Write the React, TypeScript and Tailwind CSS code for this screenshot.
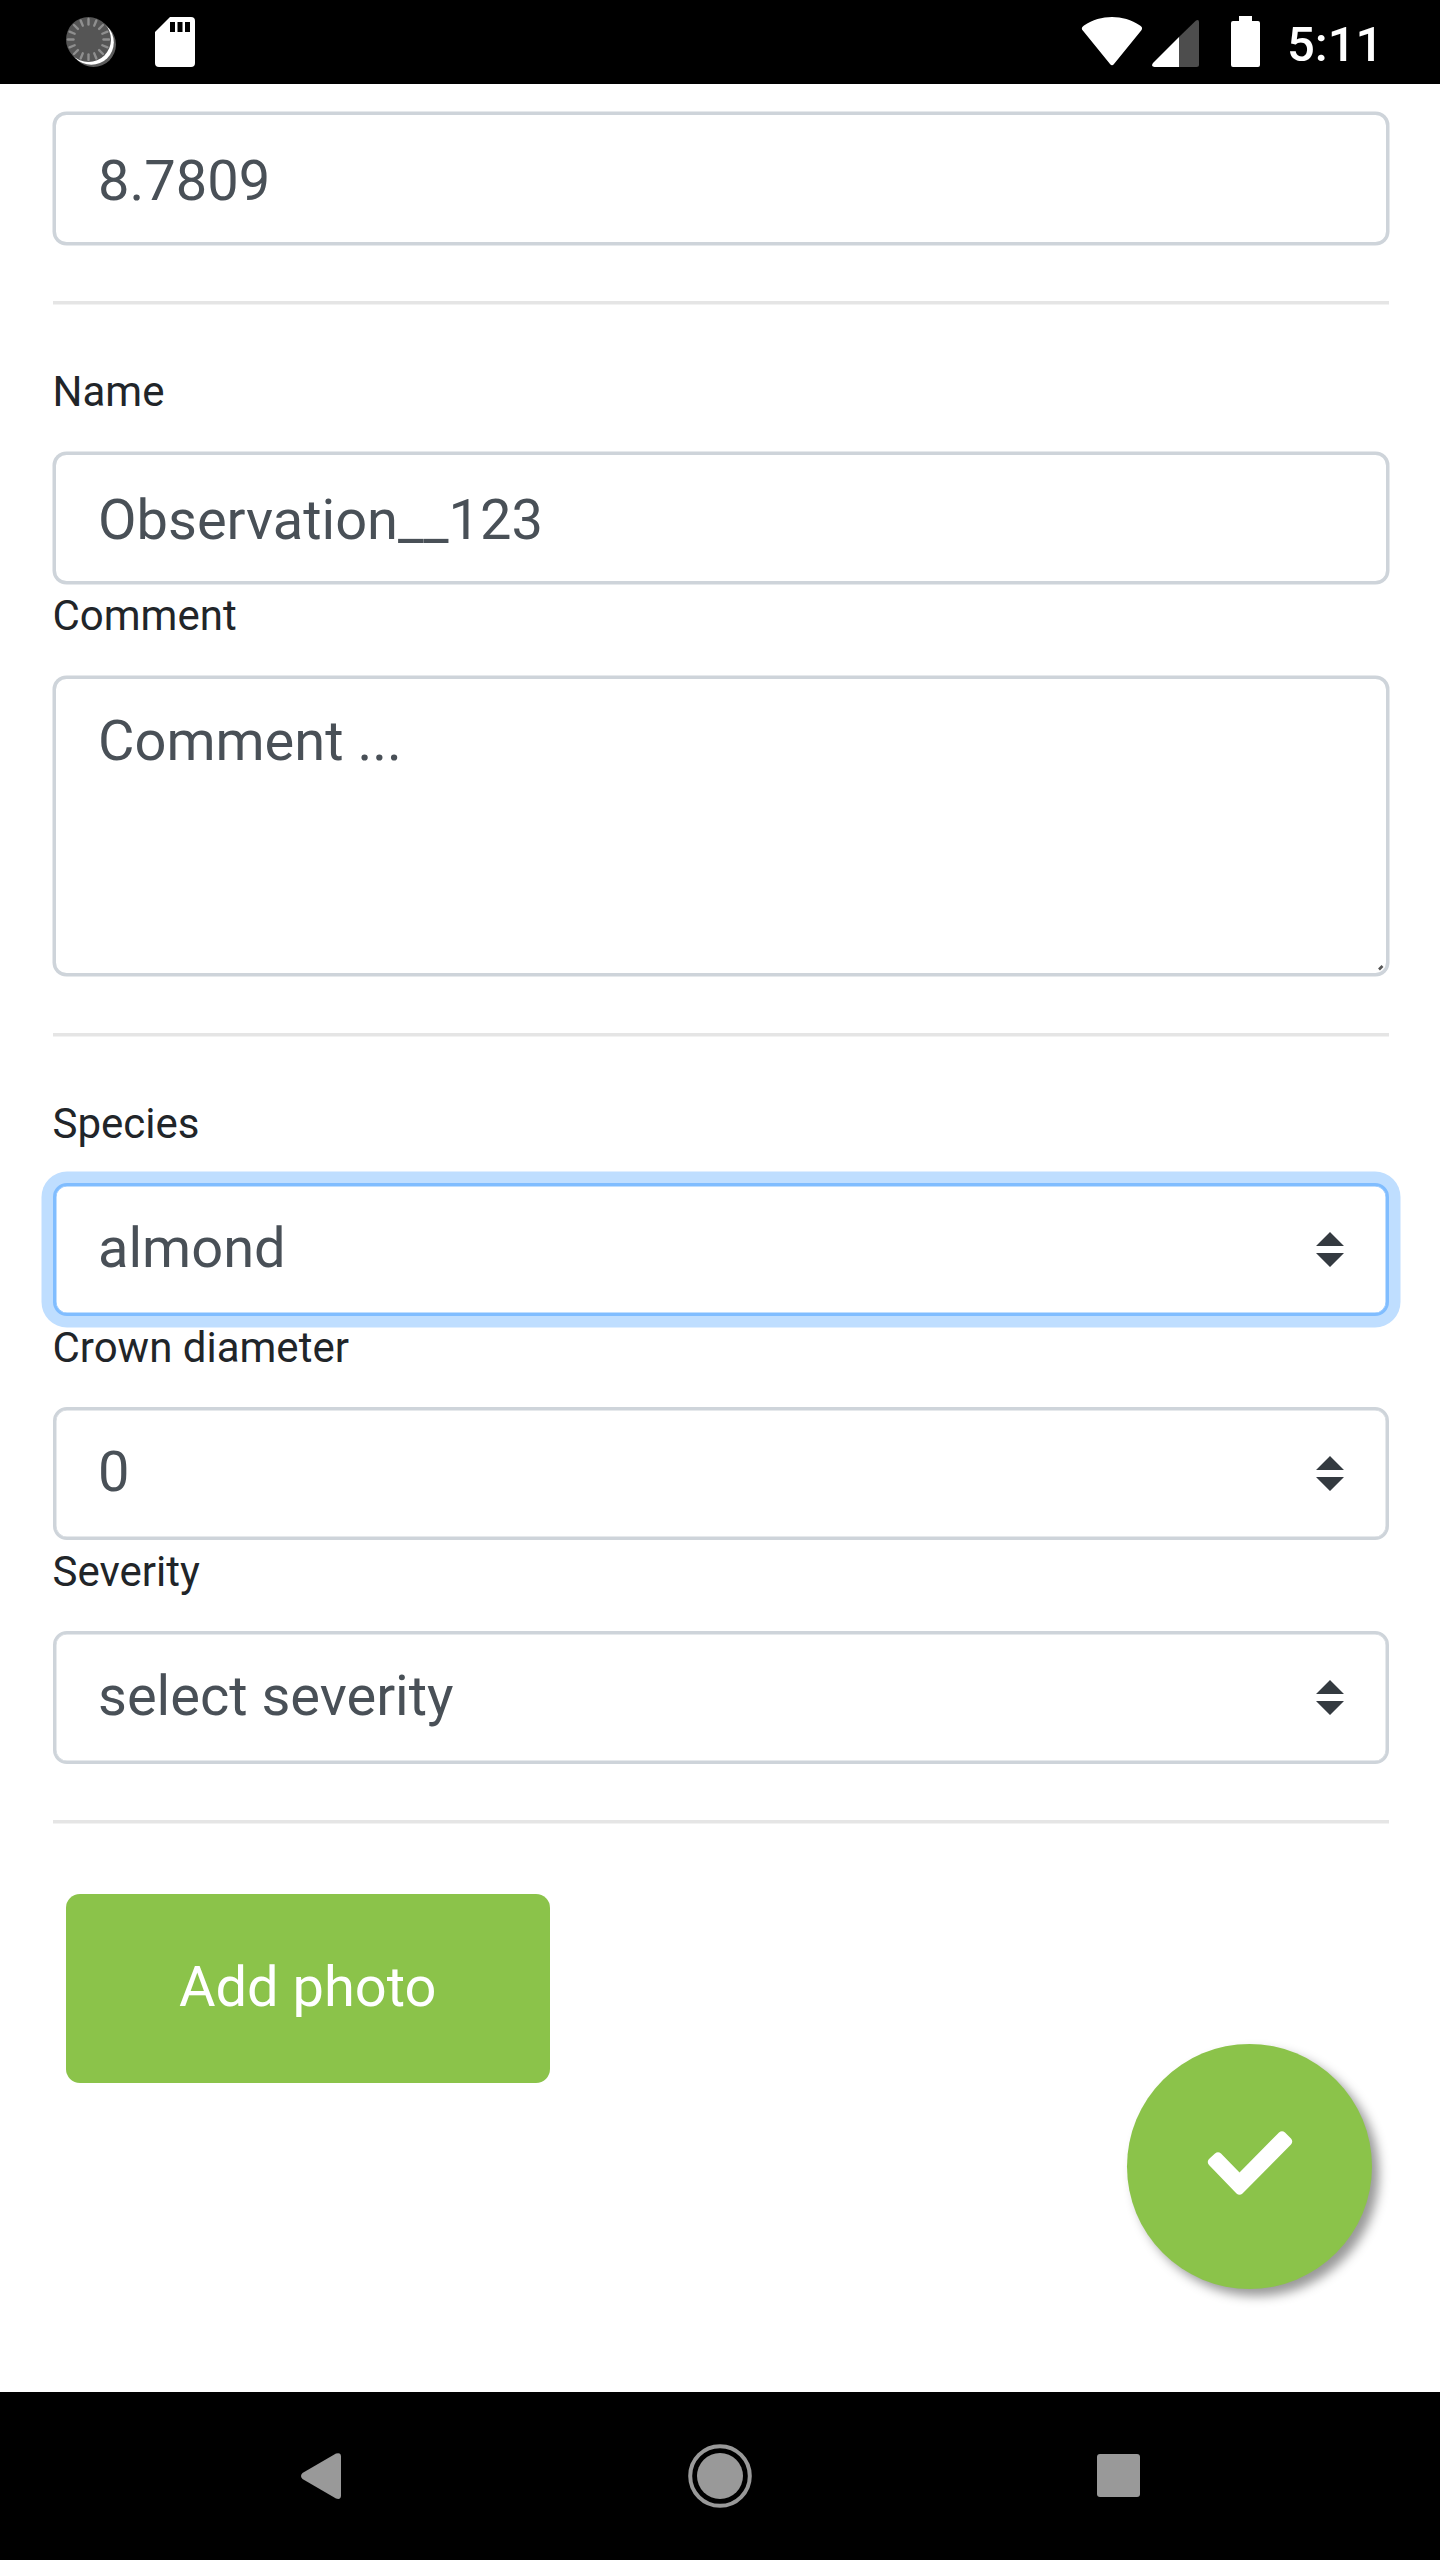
import type { ReactNode } from "react";

const rays = Array.from({ length: 16 }, (_, i) => i * 22.5);

function StatusBar() {
  return (
    <header className="flex h-[84px] shrink-0 items-start bg-black">
      <svg className="ml-[60px] h-[84px] w-[60px]" viewBox="60 0 60 84">
        <circle cx="93.500" cy="44.500" r="22.500" fill="#5c5c5c" />
        <circle cx="91.300" cy="42.300" r="22.500" fill="#fff" />
        <circle cx="88.500" cy="39.500" r="22.500" fill="#555" />
        {rays.map((a) => (
          <path
            key={a}
            d="M103.500 39.500h5.500"
            stroke="#8f8f8f"
            strokeWidth="2.4"
            strokeLinecap="round"
            transform={`rotate(${a} 88.5 39.5)`}
          />
        ))}
      </svg>
      <svg className="ml-[35px] h-[84px] w-[40px]" viewBox="155 0 40 84">
        <path d="M170 17h21a4 4 0 0 1 4 4v42a4 4 0 0 1-4 4h-32a4 4 0 0 1-4-4V32Z" fill="#fff" />
        <path d="M170 22h5v10h-5zM177.500 22h5v10h-5zM185 22h5v10h-5z" fill="#000" />
      </svg>
      <svg className="ml-[885px] h-[84px] w-[190px]" viewBox="1080 0 190 84">
        <path
          d="M1082.800 30.500C1080.800 28.200 1082.500 26.500 1084 25.400C1101 14.200 1123 14.200 1140 25.400C1141.800 26.500 1143 28.200 1141.200 30.500L1114 64Q1112 66.500 1110 64Z"
          fill="#fff"
        />
        <path d="M1179 37 1196 20.500Q1199 19 1199 22V64.500Q1199 67 1196.500 67H1179Z" fill="#4d4d4d" />
        <path d="M1179 37V67H1154.500Q1150.500 66.500 1153 63Z" fill="#fff" />
        <path d="M1239 16h13v5h6a2 2 0 0 1 2 2v42a2 2 0 0 1-2 2h-25a2 2 0 0 1-2-2V23a2 2 0 0 1 2-2h6z" fill="#fff" />
      </svg>
      <span className="mt-[16px] ml-[17px] text-[49px] leading-[57px] font-medium text-white">5:11</span>
    </header>
  );
}

const box =
  "flex w-full rounded-[13.5px] border-[3px] border-[#ced4da] bg-white px-[42px] text-[56px] text-[#495057] shadow-[0_0_0_0.5px_#ced4da]";

function Label({ children }: { children: ReactNode }) {
  return (
    <label className="-ml-[0.5px] block h-[91px] pt-[6.5px] text-[42px] leading-[49px] text-[#212529]">
      {children}
    </label>
  );
}

function SelectBox({ value, focused = false }: { value: string; focused?: boolean }) {
  return (
    <div
      className={
        focused
          ? "flex h-[133px] items-center justify-between rounded-[14px] border-[3px] border-[#80bdff] bg-white pr-[42px] pl-[42px] text-[56px] text-[#495057] shadow-[inset_0_0_0_0.5px_#80bdff,0_0_0_11.5px_#bfdeff]"
          : "flex h-[133px] items-center justify-between rounded-[14px] border-[3px] border-[#ced4da] bg-white pr-[42px] pl-[42px] text-[56px] text-[#495057] shadow-[inset_0_0_0_0.5px_#ced4da]"
      }
    >
      <span className="-mt-[3px] leading-[66px]">{value}</span>
      <svg className="-mt-[1px] h-[35px] w-[28px]" viewBox="0 0 4 5">
        <path fill="#343a40" d="M2 0L0 2h4zm0 5L0 3h4z" />
      </svg>
    </div>
  );
}

function Rule() {
  return (
    <div className="h-[3.5px]">
      <div className="h-[3px] bg-[#e5e5e5] shadow-[0_0.5px_0_#e5e5e5]" />
    </div>
  );
}

export default function App() {
  return (
    <div className="flex h-[2560px] w-[1440px] flex-col bg-white font-[Roboto,sans-serif]">
      <StatusBar />
      <main className="relative h-[2308px] px-[53px] pt-[28px]">
        <div className="w-[1336px]">
          <div className={`${box} h-[133px] items-center`}>
            <span className="mt-[4px] leading-[66px]">8.7809</span>
          </div>
          <div className="pt-[56px] pb-[56px]"><Rule /></div>
          <Label>Name</Label>
          <div className={`${box} h-[132.5px] items-center`}>
            <span className="mt-[4.5px] leading-[66px]">Observation__123</span>
          </div>
          <div className="pt-[0.5px]"><Label>Comment</Label></div>
          <div className={`${box} relative h-[300.5px] items-start`}>
            <span className="mt-[29px] leading-[66px]">Comment ...</span>
            <svg className="absolute right-0 bottom-0 h-[10px] w-[10px]" viewBox="0 0 10 10">
              <path d="M3 6.500 6.500 3" stroke="#555" strokeWidth="2.600" />
            </svg>
          </div>
          <div className="pt-[56.5px] pb-[56px]"><Rule /></div>
          <Label>Species</Label>
          <SelectBox value="almond" focused />
          <Label>Crown diameter</Label>
          <SelectBox value="0" />
          <Label>Severity</Label>
          <SelectBox value="select severity" />
          <div className="pt-[56px] pb-[70px]"><Rule /></div>
          <button className="ml-[13px] flex h-[189px] w-[483.5px] items-center justify-center rounded-[14px] bg-[#8bc34a] pb-[3px] text-[56px] text-white">
            Add photo
          </button>
        </div>
        <button className="absolute top-[1959.5px] left-[1127px] flex h-[245px] w-[245px] items-center justify-center rounded-full bg-[#8bc34a] shadow-[7px_7px_10.5px_#999]">
          <svg className="-mt-[6px] h-[66px] w-[86px]" viewBox="1206.500 2130 86 66">
            <path
              d="M1208.500 2165Q1206 2162 1208.500 2159L1214.500 2153.500Q1217.500 2151 1220.500 2153.500L1239 2172.500 1278.500 2132.500Q1281.500 2130 1284.500 2132.500L1290.500 2138.500Q1293 2141.500 1290.500 2144.500L1242 2193.500Q1239 2196 1236 2193.500Z"
              fill="#fff"
            />
          </svg>
        </button>
      </main>
      <nav className="flex h-[168px] items-center bg-black">
        <svg className="ml-[300px] h-[48px] w-[42px]" viewBox="300 2452 42 48">
          <path d="M302.500 2473 336 2453.500Q341 2452 341 2456.500V2495.500Q341 2500 336 2498.500L302.500 2479Q299.500 2476 302.500 2473Z" fill="#999" />
        </svg>
        <svg className="-mt-[1px] ml-[344.500px] h-[66px] w-[66px]" viewBox="-33 -33 66 66">
          <circle r="29.800" fill="none" stroke="#999" strokeWidth="4" />
          <circle r="23" fill="#999" />
        </svg>
        <div className="-mt-[1px] ml-[344px] h-[43px] w-[43px] rounded-[3px] bg-[#999]" />
      </nav>
    </div>
  );
}
